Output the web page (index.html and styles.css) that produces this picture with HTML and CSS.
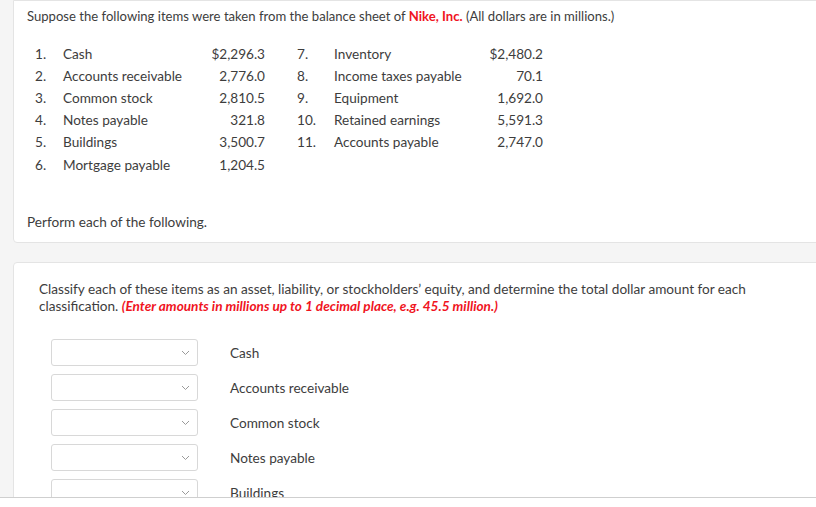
FILE: index.html
```html
<!DOCTYPE html>
<html>
<head>
<meta charset="utf-8">
<link rel="stylesheet" href="styles.css">
</head>
<body>
<div class="viewport">
  <div class="rail"></div>
  <div class="main">
    <section class="card card-intro">
      <p class="lead">Suppose the following items were taken from the balance sheet of <strong class="red">Nike, Inc.</strong> (All dollars are in millions.)</p>
      <div class="items">
        <span>1.</span><span>Cash</span><span class="amt">$2,296.3</span>
        <span class="num2">7.</span><span>Inventory</span><span class="amt">$2,480.2</span>
        <span>2.</span><span>Accounts receivable</span><span class="amt">2,776.0</span>
        <span class="num2">8.</span><span>Income taxes payable</span><span class="amt">70.1</span>
        <span>3.</span><span>Common stock</span><span class="amt">2,810.5</span>
        <span class="num2">9.</span><span>Equipment</span><span class="amt">1,692.0</span>
        <span>4.</span><span>Notes payable</span><span class="amt">321.8</span>
        <span class="num2">10.</span><span>Retained earnings</span><span class="amt">5,591.3</span>
        <span>5.</span><span>Buildings</span><span class="amt">3,500.7</span>
        <span class="num2">11.</span><span>Accounts payable</span><span class="amt">2,747.0</span>
        <span>6.</span><span>Mortgage payable</span><span class="amt">1,204.5</span>
      </div>
      <p class="perform">Perform each of the following.</p>
    </section>
    <section class="card card-task">
      <p class="instr">Classify each of these items as an asset, liability, or stockholders’ equity, and determine the total dollar amount for each classification. <em class="red">(Enter amounts in millions up to 1 decimal place, e.g. 45.5 million.)</em></p>
      <div class="rows">
        <div class="row"><div class="select"><svg width="9" height="6" viewBox="0 0 9 6"><path d="M1 1l3.5 3.5L8 1" fill="none" stroke="#9a9a9a" stroke-width="1"/></svg></div><span>Cash</span></div>
        <div class="row"><div class="select"><svg width="9" height="6" viewBox="0 0 9 6"><path d="M1 1l3.5 3.5L8 1" fill="none" stroke="#9a9a9a" stroke-width="1"/></svg></div><span>Accounts receivable</span></div>
        <div class="row"><div class="select"><svg width="9" height="6" viewBox="0 0 9 6"><path d="M1 1l3.5 3.5L8 1" fill="none" stroke="#9a9a9a" stroke-width="1"/></svg></div><span>Common stock</span></div>
        <div class="row"><div class="select"><svg width="9" height="6" viewBox="0 0 9 6"><path d="M1 1l3.5 3.5L8 1" fill="none" stroke="#9a9a9a" stroke-width="1"/></svg></div><span>Notes payable</span></div>
        <div class="row"><div class="select"><svg width="9" height="6" viewBox="0 0 9 6"><path d="M1 1l3.5 3.5L8 1" fill="none" stroke="#9a9a9a" stroke-width="1"/></svg></div><span>Buildings</span></div>
      </div>
    </section>
  </div>
</div>
<div class="bottom"></div>
</body>
</html>
```
FILE: styles.css
```css
html, body {
  margin: 0;
  padding: 0;
  background: #ffffff;
}
body {
  font-family: Lato, "Open Sans", sans-serif;
  font-size: 13.6px;
  color: #3d3d3d;
  width: 816px;
  overflow: hidden;
}
.viewport {
  display: flex;
  height: 497px;
  overflow: hidden;
  background: #f5f5f5;
}
.rail {
  width: 13px;
  flex: none;
  background: #f5f5f5;
}
.main {
  flex: 1;
  overflow: hidden;
  display: flex;
  flex-direction: column;
  gap: 19px;
}
.card {
  background: #fff;
  border: 1px solid #e4e4e4;
  border-radius: 4px;
  margin-right: -12px;
  flex: none;
}
.card-intro {
  height: 243px;
  padding: 7px 0 0 13px;
  box-sizing: border-box;
  border-top-left-radius: 0;
}
.red {
  color: #f0141e;
}
strong.red {
  font-weight: 700;
}
em.red {
  font-weight: 700;
  font-style: italic;
}
.lead {
  margin: 0;
  line-height: 17px;
  font-size: 13.1px;
}
.items {
  display: grid;
  grid-template-columns: 28px 110px 92px 69px 120px 89px;
  grid-auto-rows: 22.2px;
  align-items: center;
  margin: 18px 0 0 8px;
  line-height: 17px;
  white-space: nowrap;
}
.num2 {
  padding-left: 32px;
}
.amt {
  text-align: right;
}
.perform {
  margin: 38px 0 0 0;
  line-height: 17px;
}
.card-task {
  flex: 1;
  padding: 18px 0 0 25px;
}
.instr {
  margin: 0;
  line-height: 17px;
  width: 740px;
}
.rows {
  display: flex;
  flex-direction: column;
  gap: 8px;
  margin: 24px 0 0 12px;
}
.row {
  display: flex;
  align-items: center;
  gap: 32px;
}
.select {
  width: 147px;
  height: 27px;
  box-sizing: border-box;
  border: 1px solid #d8d8d8;
  border-radius: 3px;
  display: flex;
  align-items: center;
  justify-content: flex-end;
  padding-right: 7px;
  background: #fff;
}
.bottom {
  height: 10px;
  border-top: 1px solid #cfcfcf;
  background: #fff;
}
```
